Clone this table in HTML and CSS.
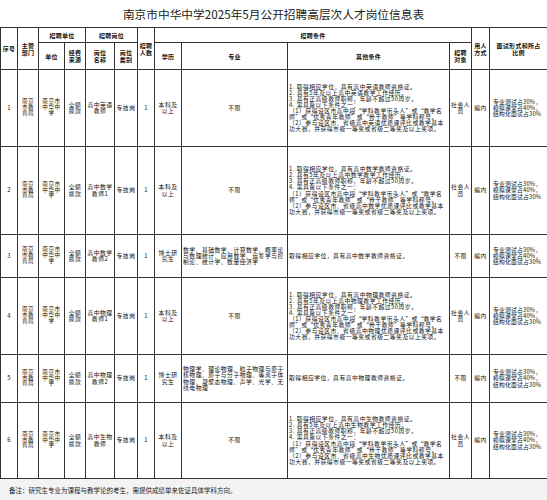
FILE: index.html
```html
<!DOCTYPE html>
<html lang="zh-CN">
<head>
<meta charset="utf-8">
<title>南京市中华中学2025年5月公开招聘高层次人才岗位信息表</title>
<link rel="stylesheet" href="styles.css">
</head>
<body>
<div class="sheet">
  <div class="title">南京市中华中学2025年5月公开招聘高层次人才岗位信息表</div>
  <table class="grid">
    <colgroup>
      <col class="c1"><col class="c2"><col class="c3"><col class="c4"><col class="c5"><col class="c6"><col class="c7"><col class="c8"><col class="c9"><col class="c10"><col class="c11"><col class="c12"><col class="c13">
    </colgroup>
    <thead>
      <tr class="ha">
        <th rowspan="2">序号</th>
        <th rowspan="2">主管<br>部门</th>
        <th colspan="2">招聘单位</th>
        <th colspan="2">招聘岗位</th>
        <th rowspan="2">招聘<br>人数</th>
        <th colspan="4">招聘条件</th>
        <th rowspan="2">用人<br>方式</th>
        <th rowspan="2">面试形式和所占<br>比例</th>
      </tr>
      <tr class="hb">
        <th>单位</th>
        <th>经费<br>来源</th>
        <th>岗位<br>名称</th>
        <th>岗位<br>类别</th>
        <th>学历</th>
        <th>专业</th>
        <th>其他条件</th>
        <th>招聘<br>对象</th>
      </tr>
    </thead>
    <tbody>
      <tr class="r1">
        <td>1</td>
        <td class="tight">南京<br>市教<br>育局</td>
        <td class="tight">南京市<br>中华中<br>学</td>
        <td>全额<br>拨款</td>
        <td>高中英语<br>教师</td>
        <td>专技岗</td>
        <td>1</td>
        <td>本科及<br>以上</td>
        <td>不限</td>
        <td class="left">1. 取得相应学位，具有高中英语教师资格证。<br>2. 具有5年及以上高中英语教学工作经历。<br>3. 具有正高级教师职称，年龄不超过50周岁。<br>4. 需具备以下条件之一：<br>（1）获得设区市高中段<span class="ql">“</span>学科教学带头人<span class="qr">”</span>或<span class="ql">“</span>教学名<br>师<span class="qr">”</span>或<span class="ql">“</span>优秀青年教师<span class="qr">”</span>或<span class="ql">“</span>骨干教师<span class="qr">”</span>等学科称号。<br>（2）参与设区市、省级高中英语优质课评比或教学基本<br>功大赛，并获得市级一等奖或省级二等奖及以上奖项。</td>
        <td>社会人<br>员</td>
        <td>编内</td>
        <td class="left iv">专业测试占30%，<br>模拟课堂占40%，<br>结构化面试占30%</td>
      </tr>
      <tr class="r2">
        <td>2</td>
        <td class="tight">南京<br>市教<br>育局</td>
        <td class="tight">南京市<br>中华中<br>学</td>
        <td>全额<br>拨款</td>
        <td>高中数学<br>教师1</td>
        <td>专技岗</td>
        <td>1</td>
        <td>本科及<br>以上</td>
        <td>不限</td>
        <td class="left">1. 取得相应学位，具有高中数学教师资格证。<br>2. 具有5年及以上高中数学教学工作经历。<br>3. 具有正高级教师职称，年龄不超过50周岁。<br>4. 需具备以下条件之一：<br>（1）获得设区市高中段<span class="ql">“</span>学科教学带头人<span class="qr">”</span>或<span class="ql">“</span>教学名<br>师<span class="qr">”</span>或<span class="ql">“</span>优秀青年教师<span class="qr">”</span>或<span class="ql">“</span>骨干教师<span class="qr">”</span>等学科称号。<br>（2）参与设区市、省级高中数学优质课评比或教学基本<br>功大赛，并获得市级一等奖或省级二等奖及以上奖项。</td>
        <td>社会人<br>员</td>
        <td>编内</td>
        <td class="left iv">专业测试占30%，<br>模拟课堂占40%，<br>结构化面试占30%</td>
      </tr>
      <tr class="r3">
        <td>3</td>
        <td class="tight">南京<br>市教<br>育局</td>
        <td class="tight">南京市<br>中华中<br>学</td>
        <td>全额<br>拨款</td>
        <td>高中数学<br>教师2</td>
        <td>专技岗</td>
        <td>1</td>
        <td>博士研<br>究生</td>
        <td class="left">数学、基础数学、计算数学、概率论<br>与数理统计、应用数学、运筹学与控<br>制论、统计学、数量经济学</td>
        <td class="left">取得相应学位，具有高中数学教师资格证。</td>
        <td>不限</td>
        <td>编内</td>
        <td class="left iv">专业测试占30%，<br>模拟课堂占40%，<br>结构化面试占30%</td>
      </tr>
      <tr class="r4">
        <td>4</td>
        <td class="tight">南京<br>市教<br>育局</td>
        <td class="tight">南京市<br>中华中<br>学</td>
        <td>全额<br>拨款</td>
        <td>高中物理<br>教师1</td>
        <td>专技岗</td>
        <td>1</td>
        <td>本科及<br>以上</td>
        <td>不限</td>
        <td class="left">1. 取得相应学位，具有高中物理教师资格证。<br>2. 具有5年及以上高中物理教学工作经历。<br>3. 具有正高级教师职称，年龄不超过50周岁。<br>4. 需具备以下条件之一：<br>（1）获得设区市高中段<span class="ql">“</span>学科教学带头人<span class="qr">”</span>或<span class="ql">“</span>教学名<br>师<span class="qr">”</span>或<span class="ql">“</span>优秀青年教师<span class="qr">”</span>或<span class="ql">“</span>骨干教师<span class="qr">”</span>等学科称号。<br>（2）参与设区市、省级高中物理优质课评比或教学基本<br>功大赛，并获得市级一等奖或省级二等奖及以上奖项。</td>
        <td>社会人<br>员</td>
        <td>编内</td>
        <td class="left iv">专业测试占30%，<br>模拟课堂占40%，<br>结构化面试占30%</td>
      </tr>
      <tr class="r5">
        <td>5</td>
        <td class="tight">南京<br>市教<br>育局</td>
        <td class="tight">南京市<br>中华中<br>学</td>
        <td>全额<br>拨款</td>
        <td>高中物理<br>教师2</td>
        <td>专技岗</td>
        <td>1</td>
        <td>博士研<br>究生</td>
        <td class="left">物理学、理论物理、粒子物理与原子<br>核物理、原子与分子物理、等离子体<br>物理、凝聚态物理、声学、光学、无<br>线电物理</td>
        <td class="left">取得相应学位，具有高中物理教师资格证。</td>
        <td>不限</td>
        <td>编内</td>
        <td class="left iv">专业测试占30%，<br>模拟课堂占40%，<br>结构化面试占30%</td>
      </tr>
      <tr class="r6">
        <td>6</td>
        <td class="tight">南京<br>市教<br>育局</td>
        <td class="tight">南京市<br>中华中<br>学</td>
        <td>全额<br>拨款</td>
        <td>高中生物<br>教师</td>
        <td>专技岗</td>
        <td>1</td>
        <td>本科及<br>以上</td>
        <td>不限</td>
        <td class="left">1. 取得相应学位，具有高中生物教师资格证。<br>2. 具有5年及以上高中生物教学工作经历。<br>3. 具有正高级教师职称，年龄不超过50周岁。<br>4. 需具备以下条件之一：<br>（1）获得设区市高中段<span class="ql">“</span>学科教学带头人<span class="qr">”</span>或<span class="ql">“</span>教学名<br>师<span class="qr">”</span>或<span class="ql">“</span>优秀青年教师<span class="qr">”</span>或<span class="ql">“</span>骨干教师<span class="qr">”</span>等学科称号。<br>（2）参与设区市、省级高中生物优质课评比或教学基本<br>功大赛，并获得市级一等奖或省级二等奖及以上奖项。</td>
        <td>社会人<br>员</td>
        <td>编内</td>
        <td class="left iv">专业测试占30%，<br>模拟课堂占40%，<br>结构化面试占30%</td>
      </tr>
    </tbody>
  </table>
  <div class="note">备注：研究生专业为课程与教学论的考生，需提供成绩单来佐证具体学科方向。</div>
</div>
</body>
</html>
```

FILE: styles.css
```css
html, body {
  margin: 0;
  padding: 0;
  background: #ffffff;
}

.sheet {
  width: 547px;
  height: 500px;
  overflow: hidden;
  font-family: "Noto Sans CJK SC", "Noto Sans", sans-serif;
  color: #111;
}

.title {
  height: 27px;
  line-height: 28px;
  text-align: center;
  font-size: 11.7px;
  color: #222;
}

.grid {
  border-collapse: collapse;
  table-layout: fixed;
  width: 547px;
}

.grid th,
.grid td {
  border: 1px solid #333;
  padding: 0 1px;
  text-align: center;
  vertical-align: middle;
  overflow: hidden;
  white-space: nowrap;
}

.grid th {
  font-size: 6px;
  line-height: 7px;
  font-weight: 700;
  letter-spacing: 0.3px;
  color: #111;
}

.grid td {
  font-size: 5.8px;
  line-height: 6.1px;
  letter-spacing: 0.5px;
  color: #111;
}

.grid td.tight {
  font-size: 5.6px;
  line-height: 5.7px;
}

.grid td.left {
  text-align: left;
}

.grid td.iv {
  padding-left: 3px;
  letter-spacing: 0.2px;
}

.ql,
.qr {
  display: inline-block;
  width: 1em;
}

.ql { text-align: right; }
.qr { text-align: left; }

.c1 { width: 17px; }
.c2 { width: 21px; }
.c3 { width: 26px; }
.c4 { width: 21px; }
.c5 { width: 29px; }
.c6 { width: 23px; }
.c7 { width: 17px; }
.c8 { width: 27px; }
.c9 { width: 106px; }
.c10 { width: 162px; }
.c11 { width: 22px; }
.c12 { width: 18px; }
.c13 { width: 58px; }

.ha { height: 15px; }
.hb { height: 27px; }
.r1 { height: 77px; }
.r2 { height: 88px; }
.r3 { height: 43px; }
.r4 { height: 77px; }
.r5 { height: 48px; }
.r6 { height: 76px; }

.note {
  height: 22px;
  line-height: 22px;
  padding-left: 9px;
  font-size: 6.5px;
  color: #222;
  background: #f3f3f3;
}
```
